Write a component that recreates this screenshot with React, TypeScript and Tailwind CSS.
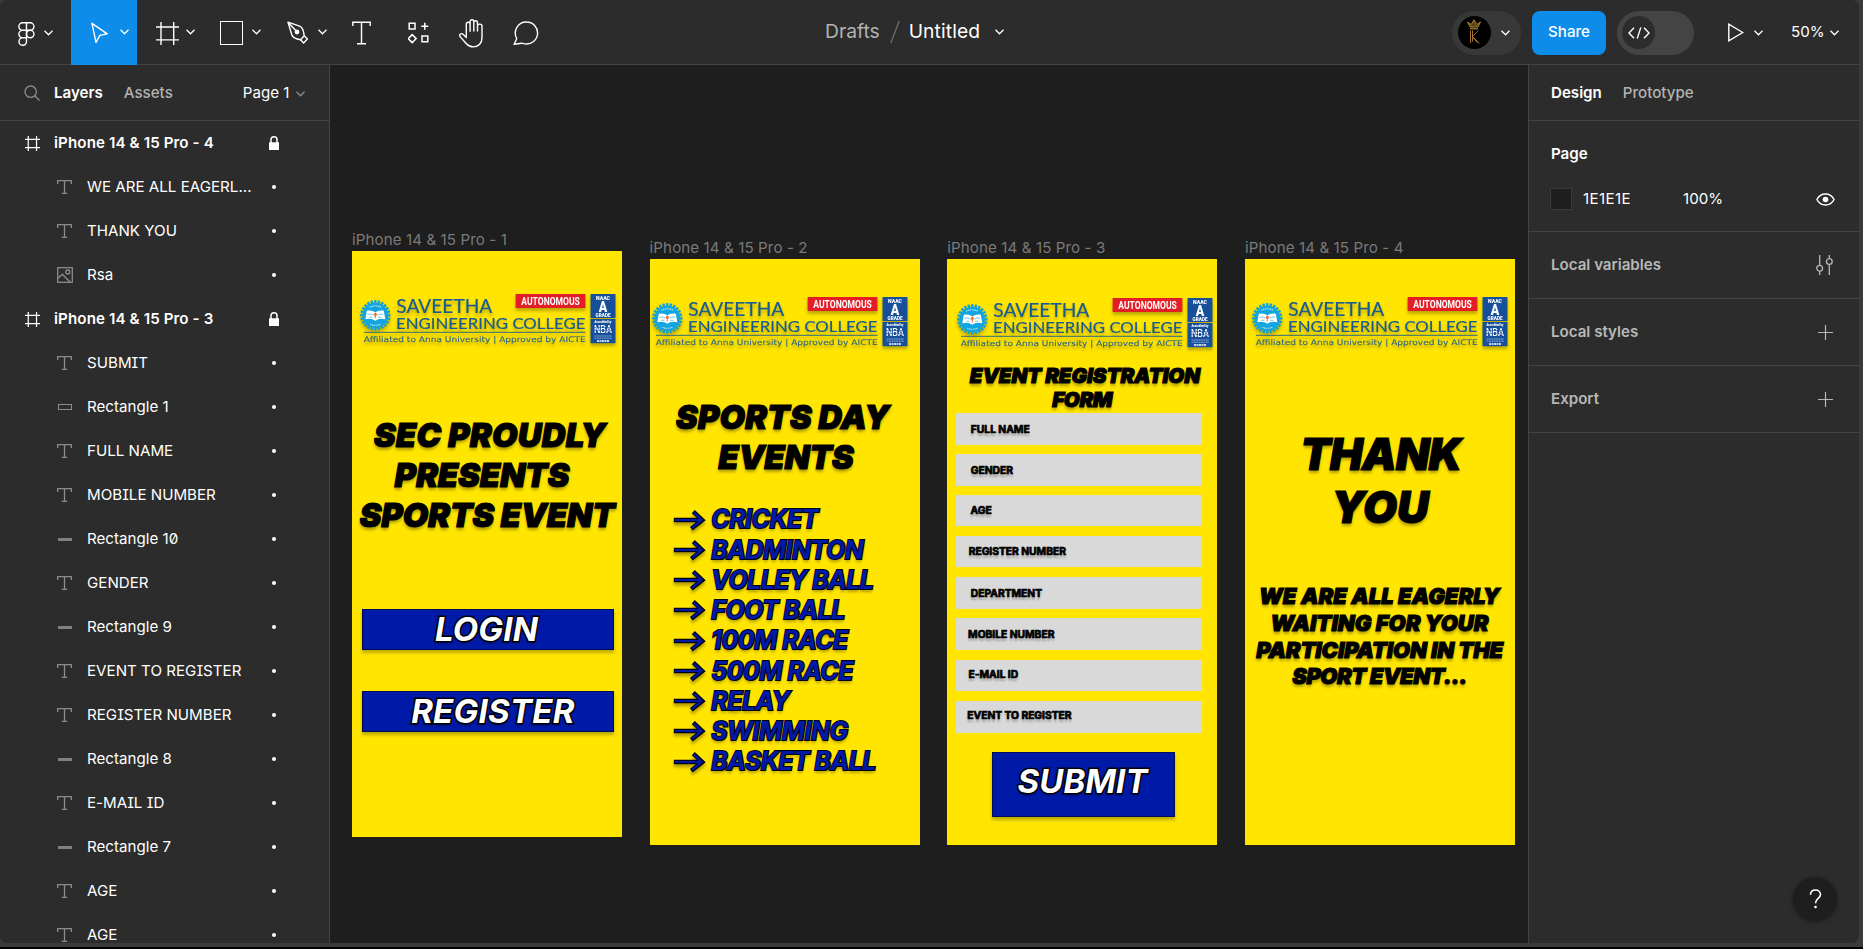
import type { ReactNode } from "react";

/* ---------- icons ---------- */

function Chevron({ className = "" }: { className?: string }) {
  return (
    <svg className={"h-[6px] w-[9px] shrink-0 " + className} viewBox="0 0 9 6" fill="none" stroke="currentColor" strokeWidth="1.3">
      <path d="M0.5 0.8 4.5 4.8 8.5 0.8" />
    </svg>
  );
}

function FigmaIcon() {
  return (
    <svg width="17" height="24" viewBox="0 0 17 24" fill="none" stroke="white" strokeWidth="1.4">
      <path d="M8.5 0.8H4.6a3.75 3.75 0 0 0 0 7.5H8.5zM8.5 0.8h3.7a3.75 3.75 0 0 1 0 7.5H8.5zM8.5 8.3H4.6a3.75 3.75 0 0 0 0 7.5H8.5zM8.5 15.8H4.6a3.75 3.75 0 1 0 3.9 3.75z" />
      <circle cx="12.2" cy="12.05" r="3.75" />
    </svg>
  );
}

function MoveIcon() {
  return (
    <svg width="18" height="23" viewBox="0 0 18 23" fill="none" stroke="white" strokeWidth="1.4">
      <path d="M1 1.3 16.2 11.8 8.8 13.4 5 20.4z" strokeLinejoin="round" />
    </svg>
  );
}

function FrameIcon({ size = 23, className = "" }: { size?: number; className?: string }) {
  return (
    <svg width={size} height={size} viewBox="0 0 23 23" className={className} fill="none" stroke="currentColor" strokeWidth={size > 20 ? 1.4 : 1.9}>
      <path d="M5 0v23M17.7 0v23M0 5h23M0 17.9h23" />
    </svg>
  );
}

function PenIcon() {
  return (
    <svg width="22" height="23" viewBox="0 0 22 23" fill="none" stroke="white" strokeWidth="1.4" strokeLinejoin="round">
      <path d="M1 1.2 12.6 5.2c3 1.2 4.2 5.6 4.6 9.6l-3.6 4c-4.2-.6-7.8-2-8.8-5z" />
      <path d="M1.2 1.4 9 9.8" />
      <circle cx="10" cy="11" r="1.7" fill="white" />
      <path d="m17.2 14.8 3.2 3.1-3.8 4-3-3.1" />
    </svg>
  );
}

function TextToolIcon() {
  return (
    <svg width="19" height="24" viewBox="0 0 19 24" fill="none" stroke="white" strokeWidth="1.4">
      <path d="M.8 5V1.2h17.4V5M9.5 1.2v21.6M5 22.8h9" />
    </svg>
  );
}

function ResourcesIcon() {
  return (
    <svg width="21" height="22" viewBox="0 0 21 22" fill="none" stroke="white" strokeWidth="1.5">
      <path d="M1.2 1.2h5.8v5.8H1.2zM14 14h5.8v5.8H14zM16.8.8v7M13.3 4.3h7M4.2 12.6l4 4-4 4-4-4z" />
    </svg>
  );
}

function HandIcon() {
  return (
    <svg width="25" height="29" viewBox="0 0 25 29" fill="none" stroke="white" strokeWidth="1.4" strokeLinecap="round" strokeLinejoin="round">
      <path d="M7.3 16.2V5.2c0-2.6 3.8-2.6 3.8 0v7M11.1 12V2.6c0-2.5 3.7-2.5 3.7 0V12M14.8 12V3.6c0-2.5 3.7-2.5 3.7 0V12M18.5 7c0-2.5 4.5-2.5 4.5 0v11.5c0 5.5-3.2 9.4-8.6 9.4-3.4 0-5.4-1.3-7-3.1L1.3 17.9c-1.7-2.1.8-4.3 2.7-2.6l3.3 3.1v-2.2" />
    </svg>
  );
}

function CommentIcon() {
  return (
    <svg width="26" height="25" viewBox="0 0 26 25" fill="none" stroke="white" strokeWidth="1.4" strokeLinejoin="round">
      <path d="M13.6 1a11 11 0 1 1-1.5 21.9c-1.2 0-2.3-.3-3.3-.7L1.1 23.3l2.7-5.8A11 11 0 0 1 13.6 1z" />
    </svg>
  );
}

function CodeIcon() {
  return (
    <svg width="22" height="12" viewBox="0 0 22 12" fill="none" stroke="white" strokeWidth="1.4">
      <path d="M6 .8 1 6l5 5.2M16 .8 21 6l-5 5.2M12.8.4 9.2 11.6" />
    </svg>
  );
}

function PlusIcon() {
  return (
    <svg width="15" height="15" viewBox="0 0 15 15" fill="none" stroke="#b8b8b8" strokeWidth="1.2">
      <path d="M7.5 0v15M0 7.5h15" />
    </svg>
  );
}

function SlidersIcon() {
  return (
    <svg width="17" height="20" viewBox="0 0 17 20" fill="none" stroke="#b8b8b8" strokeWidth="1.3">
      <path d="M3.7 0v10.3M3.7 16.3V20M13.3 0v3.5M13.3 9.5V20" />
      <circle cx="3.7" cy="13.3" r="2.9" />
      <circle cx="13.3" cy="6.5" r="2.9" />
    </svg>
  );
}

function EyeIcon() {
  return (
    <svg width="19" height="13" viewBox="0 0 19 13" fill="none" stroke="white" strokeWidth="1.4">
      <path d="M.9 6.5C2.7 3 5.8 1 9.5 1s6.8 2 8.6 5.5C16.3 10 13.2 12 9.5 12S2.7 10 .9 6.5z" />
      <circle cx="9.5" cy="6.5" r="2.8" fill="white" stroke="none" />
    </svg>
  );
}

function LockIcon() {
  return (
    <svg width="10" height="14" viewBox="0 0 10 14" fill="none">
      <path d="M0 6.3h10V14H0z" fill="white" />
      <path d="M2 7V3.8a3 3 0 0 1 6 0V7" stroke="white" strokeWidth="1.5" />
    </svg>
  );
}

function LayerIcon({ kind }: { kind: string }) {
  if (kind === "text")
    return (
      <svg width="15" height="14" viewBox="0 0 15 14" fill="none" stroke="#8c8c8c" strokeWidth="1.3">
        <path d="M.7 4V.7h13.6V4M7.5.7v12.7M4.8 13.3h5.4" />
      </svg>
    );
  if (kind === "image")
    return (
      <svg width="16" height="16" viewBox="0 0 16 16" fill="none" stroke="#8c8c8c" strokeWidth="1.3">
        <rect x=".7" y=".7" width="14.6" height="14.6" />
        <circle cx="10.8" cy="5" r="2" />
        <path d="M1 11.3 5.3 7.2l8 8" />
      </svg>
    );
  if (kind === "bar") return <div className="ml-px h-[3px] w-[14px] bg-[#808080]" />;
  return <div className="ml-px h-[6px] w-[14px] border border-[#8c8c8c]" />;
}

/* ---------- toolbar ---------- */

function Tool({ children, pad, chevron = true, active = false }: { children: ReactNode; pad: string; chevron?: boolean; active?: boolean }) {
  return (
    <div className={"flex h-[65px] shrink-0 items-center " + (chevron ? "w-[66px] " : "w-[55px] ") + (active ? "bg-[#0d8ce9]" : "")}>
      <div className={"flex w-[49px] items-center " + pad}>{children}</div>
      {chevron && <Chevron className="mb-px text-white" />}
    </div>
  );
}

function Toolbar() {
  return (
    <header className="flex h-[65px] shrink-0 justify-between bg-[#2c2c2c] shadow-[inset_0_-1px_0_#444]">
      <div className="flex w-[700px]">
        <div className="flex w-[71px] items-center pl-[18px] pt-[2px]">
          <FigmaIcon />
          <Chevron className="mb-[2px] ml-[9px] text-white" />
        </div>
        <Tool pad="pl-[20px] pt-[1px]" active><MoveIcon /></Tool>
        <Tool pad="pl-[19px] pt-[1px] text-white"><FrameIcon /></Tool>
        <Tool pad="pl-[17px]"><div className="h-[24px] w-[23px] border-[1.4px] border-white" /></Tool>
        <Tool pad="pl-[18px]"><PenIcon /></Tool>
        <Tool pad="pl-[17px] pt-[1px]" chevron={false}><TextToolIcon /></Tool>
        <Tool pad="pl-[18px]" chevron={false}><ResourcesIcon /></Tool>
        <Tool pad="pl-[14px] pt-[1px]" chevron={false}><HandIcon /></Tool>
        <Tool pad="pl-[13px] pt-[2px]" chevron={false}><CommentIcon /></Tool>
      </div>
      <div className="flex flex-1 items-center pb-[3px] pl-[125px] text-[19.25px] leading-6">
        <span className="text-[#b3b3b3]">Drafts</span>
        <svg className="ml-[10px] mr-[9px] mt-[2px]" width="10" height="24" viewBox="0 0 10 24" stroke="#6e6e6e" strokeWidth="1.3">
          <path d="M.8 23 9.2 1" />
        </svg>
        <span className="tracking-[0.1px] text-white">Untitled</span>
        <Chevron className="ml-[15px] mt-[2px] text-white" />
      </div>
      <div className="flex items-center pr-px text-[15.125px] font-medium text-white">
        <div className="flex h-[44px] w-[69px] items-center rounded-full bg-[#383838] pl-[6px]">
          <svg width="33" height="33" viewBox="0 0 33 33" fill="none">
            <circle cx="16.5" cy="16.5" r="16.5" fill="#000" />
            <g stroke="#c79b3b" strokeWidth="1">
              <path d="m9.5 6 2.5 5h8l2.5-5-3.7 2.5-2.8-4.7-2.8 4.7z" fill="#5c4315" strokeWidth=".8" />
              <path d="M12 12.8h8" />
              <path d="M12.5 14.5v12.5M14.5 14.5v11" stroke="#a8742e" />
              <path d="m20.500 14.500-6 6 7 7M15.500 22l4 5" stroke="#a8742e" strokeWidth=".9" />
            </g>
          </svg>
          <Chevron className="ml-[10px]" />
        </div>
        <div className="ml-[11px] flex h-[44px] w-[74px] items-center justify-center rounded-[8px] bg-[#0d8ce9]">Share</div>
        <div className="ml-[11px] flex h-[44px] w-[77px] items-center rounded-full bg-[#444] pl-[5px]">
          <div className="flex size-[33px] items-center justify-center rounded-full bg-[#2c2c2c]"><CodeIcon /></div>
        </div>
        <svg className="ml-[34px]" width="16" height="19" viewBox="0 0 16 19" fill="none" stroke="white" strokeWidth="1.4">
          <path d="M.8 1.2v16.6L14.8 9.5z" />
        </svg>
        <Chevron className="ml-[10px]" />
        <span className="ml-[28px] w-[39px] font-normal">50%</span>
        <Chevron className="mr-[19px]" />
      </div>
    </header>
  );
}

/* ---------- layers panel ---------- */

const LAYERS: [string, string][] = [
  ["frame", "iPhone 14 & 15 Pro - 4"],
  ["text", "WE ARE ALL EAGERL..."],
  ["text", "THANK YOU"],
  ["image", "Rsa"],
  ["frame", "iPhone 14 & 15 Pro - 3"],
  ["text", "SUBMIT"],
  ["rect", "Rectangle 1"],
  ["text", "FULL NAME"],
  ["text", "MOBILE NUMBER"],
  ["bar", "Rectangle 10"],
  ["text", "GENDER"],
  ["bar", "Rectangle 9"],
  ["text", "EVENT TO REGISTER"],
  ["text", "REGISTER NUMBER"],
  ["bar", "Rectangle 8"],
  ["text", "E-MAIL ID"],
  ["bar", "Rectangle 7"],
  ["text", "AGE"],
  ["text", "AGE"],
];

function LayersPanel() {
  return (
    <aside className="flex w-[330px] shrink-0 flex-col overflow-hidden border-r border-[#444] bg-[#2c2c2c] text-[15.125px] text-white">
      <div className="flex h-[56px] shrink-0 items-center border-b border-[#444]">
        <svg className="ml-[24px] shrink-0" width="16" height="16" viewBox="0 0 16 16" fill="none" stroke="#8c8c8c" strokeWidth="1.3">
          <circle cx="6.7" cy="6.7" r="5.7" />
          <path d="m10.8 10.8 4.7 4.7" />
        </svg>
        <div className="flex items-center pt-[2px]">
          <span className="ml-[14px] font-semibold">Layers</span>
          <span className="ml-[21px] font-medium text-[#b3b3b3]">Assets</span>
          <span className="ml-[70px]">Page 1</span>
          <Chevron className="ml-[7px] text-[#8c8c8c]" />
        </div>
      </div>
      {LAYERS.map(([kind, name], i) =>
        kind === "frame" ? (
          <div key={i} className="flex h-[44px] shrink-0 items-center">
            <div className="w-[54px] pl-[25px]"><FrameIcon size={15} /></div>
            <span className="w-[214.5px] font-semibold tracking-[0.12px]">{name}</span>
            <LockIcon />
          </div>
        ) : (
          <div key={i} className="flex h-[44px] shrink-0 items-center">
            <div className="w-[87px] pl-[57px]"><LayerIcon kind={kind} /></div>
            <span className="w-[184.5px] whitespace-nowrap tracking-[0.02px] [font-feature-settings:'cv08','zero']">{name}</span>
            <span className="size-[4px] rounded-full bg-white" />
          </div>
        )
      )}
    </aside>
  );
}

/* ---------- design panel ---------- */

function DesignPanel() {
  return (
    <aside className="flex w-[331px] shrink-0 flex-col border-l border-[#444] bg-[#2c2c2c] text-[15.125px] text-white">
      <div className="flex h-[56px] items-center border-b border-[#444] pl-[22px] pt-[2px]">
        <span className="font-semibold">Design</span>
        <span className="ml-[21px] font-medium text-[#b3b3b3]">Prototype</span>
      </div>
      <div className="flex h-[111px] flex-col border-b border-[#444] pl-[22px] pr-[24px]">
        <div className="mt-[21px] font-semibold leading-6">Page</div>
        <div className="mt-[21px] flex items-center leading-6">
          <span className="-ml-px size-[22px] border border-[#3a3a3a] bg-[#1e1e1e]" />
          <span className="ml-[11px] w-[100px] tracking-[0.4px]">1E1E1E</span>
          <span className="flex-1">100%</span>
          <EyeIcon />
        </div>
      </div>
      {["Local variables", "Local styles", "Export"].map((t, i) => (
        <div key={t} className="flex h-[67px] items-center justify-between border-b border-[#444] pl-[22px] pr-[26px] text-[#b8b8b8]">
          <span className="font-semibold">{t}</span>
          {i === 0 ? <SlidersIcon /> : <PlusIcon />}
        </div>
      ))}
    </aside>
  );
}

/* ---------- artboards ---------- */

const HEAD = "font-black italic text-black [-webkit-text-stroke:1.1px_black] [text-shadow:0_3px_3px_rgba(0,0,0,0.3)]";
const BUTTON = "font-bold italic text-white [-webkit-text-stroke:3px_black] [paint-order:stroke_fill] [text-shadow:0_3px_3px_rgba(0,0,0,0.25)]";
const LIST = "font-bold italic text-[#001aa8] [-webkit-text-stroke:2px_#00000f] [paint-order:stroke_fill] [text-shadow:0_3px_3px_rgba(0,0,0,0.3)]";
const FIELD = "font-bold text-black [-webkit-text-stroke:0.7px_black] [text-shadow:0_3px_2px_rgba(0,0,0,0.25)]";

/* Text pinned on the artboard by its baseline. */
function Label({ x, base, size, track = 0, className, children }: { x: number; base: number; size: number; track?: number; className: string; children: string }) {
  return (
    <span
      className={"absolute whitespace-nowrap leading-none " + className}
      style={{ left: x, top: base - size * 0.8636, fontSize: size, letterSpacing: track }}
    >
      {children}
    </span>
  );
}

const TEETH = Array.from({ length: 24 }, (_, i) => i * 15);

function CollegeLogo({ x, y }: { x: number; y: number }) {
  return (
    <svg
      className="absolute overflow-visible [filter:drop-shadow(0_3px_1.5px_rgba(0,0,0,0.25))]"
      style={{ left: x, top: y }}
      width="256"
      height="50"
      viewBox="0 0 256 50"
      fontFamily="Lato, sans-serif"
    >
      <g transform="translate(15.3 21.3)">
        {TEETH.map((a) => (
          <rect key={a} x="-1.2" y="-15.2" width="2.4" height="4" fill="#0fa3dc" transform={`rotate(${a})`} />
        ))}
        <circle r="12.6" fill="#12a5df" />
        <path d="M-8.5-4.5C-5-5.5-2-4.5 0-2.8 2-4.5 5-5.5 8.5-4.5L10 4C6 3 2.5 3.5 0 5.5-2.5 3.5-6 3-10 4z" fill="#fff" />
        <path d="M-8-1q4-1 6 1M8-1q-4-1-6 1M-6 2h3M3 2h3" stroke="#4fb9e2" strokeWidth=".8" fill="none" />
        <circle r="1.5" cy="-1" fill="#f06a23" />
        <path d="M0-1v4" stroke="#f06a23" strokeWidth="1" />
        <path d="M-6-8q6-3 12 0M-5 9q5 2 10 0" stroke="#bfe8f7" strokeWidth="1.1" fill="none" strokeDasharray="1.2 .6" />
      </g>
      <g fill="#175a94" stroke="#175a94" strokeWidth=".2">
        <text x="36.3" y="19.3" fontSize="19.2" textLength="96" lengthAdjust="spacingAndGlyphs">SAVEETHA</text>
        <text x="36" y="34.9" fontSize="15.8" textLength="189.5" lengthAdjust="spacingAndGlyphs">ENGINEERING COLLEGE</text>
      </g>
      <path d="M4 38.3h221.5" stroke="#2c6a82" strokeWidth="1" />
      <text x="3.7" y="47.5" fontSize="7.7" fontFamily="'DejaVu Sans', sans-serif" fill="#2a6285" stroke="#2a6285" strokeWidth=".1" textLength="222" lengthAdjust="spacingAndGlyphs">
        Affiliated to Anna University | Approved by AICTE
      </text>
      <rect x="155.6" y="0" width="69.8" height="14" fill="#e41e26" />
      <text x="161.3" y="10.8" fontSize="10.3" fontFamily="Roboto, sans-serif" fontWeight="700" fill="#fff" textLength="58.5" lengthAdjust="spacingAndGlyphs">
        AUTONOMOUS
      </text>
      <rect x="230.5" y="0" width="25" height="24" fill="#174f9b" />
      <rect x="230.5" y="25" width="25" height="24.2" fill="#174f9b" />
      <g fill="#fff" fontFamily="Roboto, sans-serif" fontWeight="900" textAnchor="middle">
        <text x="243" y="5.7" fontSize="5.8" textLength="14" lengthAdjust="spacingAndGlyphs">NAAC</text>
        <text x="243" y="17.6" fontSize="15" textLength="8.5" lengthAdjust="spacingAndGlyphs">A</text>
        <text x="243" y="22.7" fontSize="5.2" textLength="15" lengthAdjust="spacingAndGlyphs">GRADE</text>
        <text x="243" y="28.8" fontSize="3.2" textLength="17" lengthAdjust="spacingAndGlyphs">Accredited by</text>
        <text x="243" y="39.2" fontSize="11.5" fontWeight="500" textLength="18" lengthAdjust="spacingAndGlyphs">NBA</text>
      </g>
      <path d="M234 33.5h18M234 36.5h18" stroke="#174f9b" strokeWidth=".5" />
      <path d="M234.5 42h17.5M234.5 44.2h17.5" stroke="#8fb0d8" strokeWidth=".9" strokeDasharray="2 .4" />
      <path d="M237 47h12.5" stroke="#fff" strokeWidth="1.3" strokeDasharray="2 .5" />
    </svg>
  );
}

function Artboard({ className, title, children }: { className: string; title: string; children: ReactNode }) {
  return (
    <section className={"absolute h-[585.5px] w-[270px] bg-[#ffe500] " + className}>
      <h2 className="absolute left-0 top-[-21px] whitespace-nowrap text-[15.125px] leading-5 tracking-[0.1px] text-[#7a7a7a]">{title}</h2>
      {children}
    </section>
  );
}

const SPORTS = ["CRICKET", "BADMINTON", "VOLLEY BALL", "FOOT BALL", "100M RACE", "500M RACE", "RELAY", "SWIMMING", "BASKET BALL"];

const FIELDS: [string, number, number, number][] = [
  ["FULL NAME", 154.2, 23.5, 174],
  ["GENDER", 195, 23.5, 214.5],
  ["AGE", 235.5, 23.2, 254.5],
  ["REGISTER NUMBER", 276.8, 21.4, 295.8],
  ["DEPARTMENT", 318, 23.5, 337.8],
  ["MOBILE NUMBER", 359, 20.8, 379],
  ["E-MAIL ID", 400.5, 21.2, 418.8],
  ["EVENT TO REGISTER", 442, 20, 460],
];

function Arrow({ y }: { y: number }) {
  return (
    <svg
      className="absolute left-[23px] overflow-visible [filter:drop-shadow(0_3px_1.5px_rgba(0,0,0,0.3))]"
      style={{ top: y }}
      width="32"
      height="20"
      viewBox="0 0 32 20"
      fill="none"
    >
      <path d="M.8 10H29M20.3 1.6 29.3 10 18.3 18.7" stroke="#00000f" strokeWidth="4.4" />
      <path d="M1.8 10H28.5M20.9 2.5 28.5 10 19 17.8" stroke="#001aa8" strokeWidth="2.2" />
    </svg>
  );
}

function Canvas() {
  return (
    <main className="relative flex-1 overflow-hidden bg-[#1e1e1e]">
      <Artboard className="left-[22px] top-[186.4px]" title="iPhone 14 & 15 Pro - 1">
        <CollegeLogo x={7.7} y={42.6} />
        <Label x={21.7} base={195.9} size={33} track={0.15} className={HEAD}>SEC PROUDLY</Label>
        <Label x={42.5} base={235.9} size={33} track={-0.25} className={HEAD}>PRESENTS</Label>
        <Label x={7.5} base={275.9} size={33} track={-0.22} className={HEAD}>SPORTS EVENT</Label>
        <div className="absolute left-[10px] top-[357.6px] h-[41px] w-[252px] border border-[#000c55] bg-[#001aa8] shadow-[0_3px_3px_rgba(0,0,0,0.25)]" />
        <div className="absolute left-[10px] top-[439.6px] h-[41px] w-[252px] border border-[#000c55] bg-[#001aa8] shadow-[0_3px_3px_rgba(0,0,0,0.25)]" />
        <Label x={82.9} base={390} size={33} track={0.15} className={BUTTON}>LOGIN</Label>
        <Label x={59.2} base={472} size={33} track={0.25} className={BUTTON}>REGISTER</Label>
      </Artboard>

      <Artboard className="left-[319.6px] top-[194px]" title="iPhone 14 & 15 Pro - 2">
        <CollegeLogo x={2.6} y={38.3} />
        <Label x={26.2} base={170} size={33} track={0} className={HEAD}>SPORTS DAY</Label>
        <Label x={68.7} base={210} size={33} track={-0.35} className={HEAD}>EVENTS</Label>
        {SPORTS.map((s, i) => (
          <Arrow key={s} y={250.6 + i * 30.25} />
        ))}
        {SPORTS.map((s, i) => (
          <Label key={s} x={61.7} base={270 + i * 30.25} size={25} track={-0.55} className={LIST}>{s}</Label>
        ))}
      </Artboard>

      <Artboard className="left-[617.3px] top-[194px]" title="iPhone 14 & 15 Pro - 3">
        <CollegeLogo x={9.3} y={39} />
        <Label x={22.5} base={124.3} size={20.6} track={-0.12} className={HEAD}>EVENT REGISTRATION</Label>
        <Label x={104.9} base={149.2} size={20.6} track={-0.4} className={HEAD}>FORM</Label>
        {FIELDS.map(([name, top, x, base]) => (
          <div key={name}>
            <div className="absolute left-[8.4px] h-[31.7px] w-[246px] bg-[#d9d9d9]" style={{ top }} />
            <Label x={x} base={base} size={10.3} track={-0.02} className={FIELD}>{name}</Label>
          </div>
        ))}
        <div className="absolute left-[44.7px] top-[492.6px] h-[65px] w-[183.5px] border border-[#000c55] bg-[#001aa8] shadow-[0_3px_3px_rgba(0,0,0,0.25)]" />
        <Label x={70.3} base={534} size={33} track={0.05} className={BUTTON}>SUBMIT</Label>
      </Artboard>

      <Artboard className="left-[915px] top-[194px]" title="iPhone 14 & 15 Pro - 4">
        <CollegeLogo x={7} y={38.3} />
        <Label x={55.5} base={211} size={44} track={-1} className={HEAD}>THANK</Label>
        <Label x={86.2} base={264} size={44} track={-0.1} className={HEAD}>YOU</Label>
        <Label x={14} base={344.8} size={22} track={0.02} className={HEAD}>WE ARE ALL EAGERLY</Label>
        <Label x={25.5} base={371.6} size={22} track={0} className={HEAD}>WAITING FOR YOUR</Label>
        <Label x={11.2} base={398.5} size={22} track={-0.14} className={HEAD}>PARTICIPATION IN THE</Label>
        <Label x={47.2} base={425.4} size={22} track={-0.45} className={HEAD}>SPORT EVENT...</Label>
      </Artboard>
    </main>
  );
}

export default function App() {
  return (
    <div className="h-[949px] w-[1863px] overflow-hidden border-b-2 border-black bg-[#3a3a3a] font-[Inter,sans-serif]">
      <div className="relative flex h-[943px] w-[1859px] flex-col overflow-hidden rounded-[8px] bg-[#2c2c2c]">
        <Toolbar />
        <div className="flex min-h-0 flex-1">
          <LayersPanel />
          <Canvas />
          <DesignPanel />
        </div>
        <div className="absolute bottom-[22px] right-[22px] flex size-[44px] items-center justify-center rounded-full bg-[#1e1e1e] text-white shadow-[0_1px_4px_rgba(0,0,0,0.4)]">
          <svg width="13" height="20" viewBox="0 0 13 20" fill="none" stroke="white" strokeWidth="1.6">
            <path d="M1.5 5.8C1.5 2.8 3.7 1 6.5 1s5 1.8 5 4.6c0 3.8-5 3.9-5 8.6" />
            <circle cx="6.5" cy="18" r="1.3" fill="white" stroke="none" />
          </svg>
        </div>
      </div>
    </div>
  );
}
